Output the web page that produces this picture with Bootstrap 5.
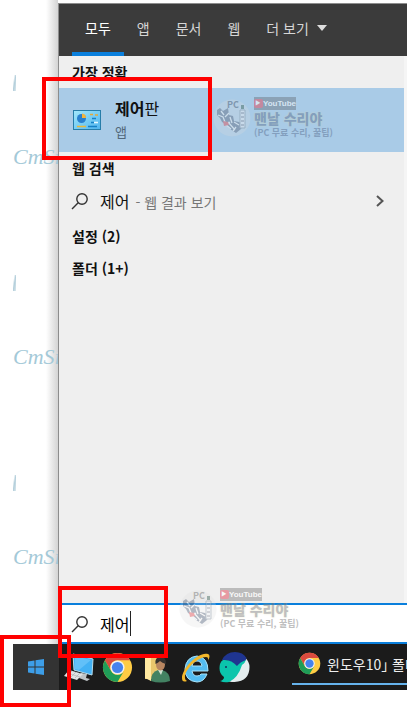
<!DOCTYPE html>
<html lang="ko">
<head>
<meta charset="utf-8">
<meta name="viewport" content="width=device-width, initial-scale=1">
<title>제어 - 검색</title>
<link href="https://cdn.jsdelivr.net/npm/bootstrap@5.3.0/dist/css/bootstrap.min.css" rel="stylesheet">
<style>
body{font-family:"Noto Sans CJK KR","Noto Sans",sans-serif;font-size:14px;line-height:20px;color:#111;background:#fff}
svg{display:block;flex:none}
.screen{min-height:100vh;padding-bottom:17px}
.wallpaper{flex:none;width:58px;padding-left:13px;padding-top:72px;background:linear-gradient(90deg,#fff 46px,#d4d4d4)}
.tile{display:flow-root;height:200px;color:#a4c9d8;font:italic 22px/24px "Liberation Serif",serif;white-space:nowrap}
.tile:last-child{height:120px}
.tick{height:16px;width:3px;margin:3px 0 54px;background:linear-gradient(100deg,#fff0 20%,#b4cfdb 50%,#dce9ee)}
.panel{margin-top:3px;border-left:1px solid #8d8d8d;border-top:1px solid #8d8d8d;background:#efefef}
.tabs{height:52px;padding-left:13px;background:#3b3b3b}
.tab{border:0;background:none;padding:0 13px;color:#d6d6d6;border-bottom:4px solid transparent;white-space:nowrap}
.tab.active{color:#fff;border-color:#0a7fdc}
.caret{width:0;height:0;border:5px solid transparent;border-top:6px solid #ddd;border-bottom:0}
.results{border-right:3px solid #f5f5f5;padding-top:6px}
.heading{font-size:14px;line-height:20px;font-weight:700;margin:0;padding-left:13px}
.best{height:64px;padding-left:14px;margin:6px 0;background:#a9cbe7;color:#111;gap:14px}
.big{font-size:16px;line-height:24px}
.sub{color:#52677a;font-size:13px;line-height:24px}
.web{height:46px;padding:0 19px 0 12px;margin-bottom:2px;color:#111;gap:11px}
.hint{color:#777;padding-left:2px}
.search{height:41px;padding-left:12px;border-top:2px solid #0a7fdc;border-bottom:2px solid #0a7fdc;background:#fff;gap:11px}
.search input{width:30px;border:0;padding:0;outline:0;background:none}
.cursor{width:1px;height:25px;background:#222}
.taskbar{height:46px;margin-left:13px;background:#1b1b1b}
.taskbar button{border:0;background:none;padding:0}
.start{flex:none;width:46px;background:#333!important}
.apps{flex:none;gap:8px;padding-left:5px}
.taskbar .window{height:41px;min-width:0;margin-left:42px;padding-left:6px;border-bottom:2px solid #66b3ec;color:#eee;gap:6px;white-space:nowrap;font-feature-settings:"halt"}
.frame{position:absolute;border:4px solid #f00;pointer-events:none}
.f1{left:42px;top:77px;width:170px;height:83px}
.f2{left:58px;top:586px;width:110px;height:72px}
.f3{left:0;top:635px;width:71px;height:72px}
.stamp{position:absolute;gap:3px;opacity:.5;color:#5f7596;pointer-events:none;white-space:nowrap}
.s1{left:213px;top:97px}
.s2{left:179px;top:588px;color:#808080}
.yt{width:42px;height:13px;background:#6e7b86;color:#fff;font:700 8px/13px "Liberation Sans Narrow","Liberation Sans",sans-serif}
.yt span{width:11px;height:9px;line-height:9px;background:#e0475a;border-radius:2px;font-size:6px}
.s2 .yt{background:#888}
.name{font-weight:900;font-size:14px;line-height:16px;text-shadow:0 0 2px #dfdc9e}
.note{font-weight:700;font-size:9px;line-height:14px}
</style>
<script src="https://cdn.jsdelivr.net/npm/bootstrap@5.3.0/dist/js/bootstrap.bundle.min.js"></script>
</head>
<body>
<svg width="0" height="0" class="position-absolute" aria-hidden="true">
<symbol id="lens" viewBox="0 0 18 18"><circle cx="11" cy="7" r="5.2" fill="none" stroke="#333" stroke-width="1.4"/><path d="M7.2 10.8 1 17" stroke="#333" stroke-width="1.4"/></symbol>
<symbol id="chrome" viewBox="0 0 32 32"><circle cx="16" cy="16" r="15" fill="#fc4"/><path d="M3 8.500A15 15 0 0 1 29 8.500H16A7.500 7.500 0 0 0 9.500 19.750Z" fill="#da4b3f"/><path d="M3 8.500 9.500 19.750A7.500 7.500 0 0 0 22.500 19.750L16 31A15 15 0 0 1 3 8.500Z" fill="#1f9d58"/><circle cx="16" cy="16" r="7.300" fill="#f2f2f2"/><circle cx="16" cy="16" r="5.800" fill="#4583ee"/></symbol>
<symbol id="mascot" viewBox="0 0 38 42"><circle cx="19" cy="21" r="18.500" fill="#ddd" opacity=".5"/><path d="m4 13 3-2 3 3 5-3 1 7 4 1 1 5 5 1 4 3-2 4-5 4-6-4-3-4-5-3-2-4-3-3z" fill="#667388"/><path d="m5 18 5 2 2 5m4-9-4 4m3 5 7 8m-10-6 6 5m3-7 5 3M8 14l3 4m6 2 2 6m-6 2 4-3m3 9 3-4" stroke="#eee" stroke-width="1.300" fill="none"/><path d="m10 24 5 1 1 3-5 1z" fill="#dd5960"/><path d="M27 13h5v18h-5z" fill="#e7eaee" stroke="#8b98a4"/><path d="M28 16h3m-3 4h3m-3 4h3m-3 4h3" stroke="#667"/><path d="M28 8h3v4h-3z" fill="#4a6e63"/></symbol>
</svg>
<main class="screen position-relative d-flex flex-column overflow-hidden">
<div class="d-flex flex-grow-1">
<div class="wallpaper overflow-hidden" aria-hidden="true">
<div class="tile"><div class="tick"></div>CmSi</div>
<div class="tile"><div class="tick"></div>CmSi</div>
<div class="tile"><div class="tick"></div>CmSi</div>
</div>
<section class="panel d-flex flex-column flex-grow-1">
<nav class="tabs d-flex">
<button class="tab active">모두</button><button class="tab">앱</button><button class="tab">문서</button><button class="tab">웹</button><button class="tab d-flex align-items-center gap-2">더 보기 <span class="caret"></span></button>
</nav>
<div class="results flex-grow-1">
<h2 class="heading">가장 정확</h2>
<a href="#" class="best d-flex align-items-center text-decoration-none">
<svg width="28" height="20" viewBox="0 0 28 20"><defs><linearGradient id="cp" x2="1" y2="1"><stop stop-color="#a2e8fb"/><stop offset="1" stop-color="#4fb4ee"/></linearGradient></defs><rect x=".5" y=".5" width="27" height="19" fill="url(#cp)" stroke="#277da9"/><circle cx="8.500" cy="8.500" r="4.500" fill="#2881cf"/><path d="M9 8V3.500A4.500 4.500 0 0 1 13 8z" fill="#f3b43a"/><path d="M4 16.500h9" stroke="#e9b838" stroke-width="1.500"/><path d="M15 16.500h9M19 8.500h4M18 12.500h3" stroke="#1681c6" stroke-width="1.500"/><path d="M17 4.500h3M22 5h3" stroke="#e5a93a" stroke-width="1.500"/><path d="M21 12.500h4" stroke="#e8f9ff" stroke-width="1.500"/></svg>
<span class="d-flex flex-column"><span class="big"><span class="fw-bold">제어</span>판</span><span class="sub">앱</span></span>
</a>
<h2 class="heading">웹 검색</h2>
<a href="#" class="web d-flex align-items-center text-decoration-none">
<svg width="18" height="18"><use href="#lens"/></svg>
<span class="flex-grow-1"><span class="big">제어</span> <span class="hint">- 웹 결과 보기</span></span>
<svg width="10" height="14" viewBox="0 0 10 14"><path d="m2 2 5.500 5L2 12" fill="none" stroke="#555" stroke-width="2"/></svg>
</a>
<h2 class="heading mb-2">설정 (2)</h2>
<h2 class="heading pt-1">폴더 (1+)</h2>
</div>
<div class="search d-flex align-items-center">
<svg width="18" height="18"><use href="#lens"/></svg>
<div class="d-flex align-items-center"><input class="big" type="text" value="제어" aria-label="검색"><span class="cursor"></span></div>
</div>
</section>
</div>
<footer class="taskbar d-flex overflow-hidden">
<button class="start d-flex align-items-center justify-content-center" aria-label="시작"><svg width="18" height="18" viewBox="0 0 18 18" fill="#3d9ee8"><path d="m1 3.500 6.500-1v6H1zm7.500-1.200L17 1v7.500H8.500zM1 9.500h6.500v6L1 14.500zm7.500 0H17V17l-8.500-1.300z"/></svg></button>
<div class="apps d-flex align-items-center">
<button aria-label="내 PC"><svg width="30" height="30" viewBox="0 0 30 30"><path d="m9 2 20 5-1 16-18-5z" fill="#43b1f4" stroke="#b7deef"/><path d="m11 4 16 4-12 10-4-1z" fill="#82d0fb" opacity=".5"/><path d="m17 21 6 1-1 4 4 1-3 2-8-3z" fill="#c0c5c7"/><path d="m5 18 14 4-6 6-13-4z" fill="#e0e2e3"/><path d="m3 21 13 4M8 19l-5 5m9-4-5 5m9-4-5 5" stroke="#aaa" stroke-width=".6"/></svg></button>
<button aria-label="Chrome"><svg width="31" height="31"><use href="#chrome"/></svg></button>
<button aria-label="사용자 폴더"><svg width="31" height="31" viewBox="0 0 31 31"><path d="M4 3h15v24H4z" fill="#e9c66c"/><path d="m4 3 6 3v23l-6-3z" fill="#ffe9a0"/><path d="M10 29q0-9 7-11h4q8 2 8 11-10 3-19 0" fill="#438262"/><path d="m17 18 3 5 2-5" fill="#d1e0d0"/><ellipse cx="19.500" cy="12.500" rx="4.500" ry="6" fill="#b88660"/><path d="M14.500 12q-1-7 5-7t5.500 7q-4-1-6-3-2 2-4.500 3" fill="#34302d"/></svg></button>
<button aria-label="Internet Explorer"><svg width="31" height="31" viewBox="0 0 31 31"><path d="M28 19H12q1 5 5 5 3 0 4-2h6q-3 8-10 8Q5 29 5 17 6 5 17 4q11 1 11 15zM12 14h10q-1-5-5-5t-5 5" fill="#54bdf2" stroke="#a9e4fc"/><path d="M7 29q-5 2-5-3C2 16 19-1 28 2q3 1 0 7 1-4-2-4C18 5 4 18 5 26q0 2 2 3" fill="#f3b72b"/></svg></button>
<button aria-label="Whale"><svg width="31" height="31" viewBox="0 0 31 31"><path d="M30.500 15q0 14-15 15-6 0-9-2 8-2 12-14 5-1 8-8 4 4 4 9" fill="#e4edef"/><path d="M3 8Q7 0 16 0q8 0 11.500 6-1 5-9 9Q11 7 3 8" fill="#1f3590"/><path d="M1 12q1-3 3-4 8-1 14 6 3-4 9-6-1 3-4 5-4 13-13 17-5 1-9-1 4-1 4-4Q-1 21 1 12" fill="#0bc5ac"/><circle cx="7" cy="15" r="1" fill="#17305c"/></svg></button>
</div>
<button class="window d-flex align-items-center flex-grow-1"><svg width="23" height="23"><use href="#chrome"/></svg><span>윈도우10」 폴더</span></button>
</footer>
<div class="stamp s1 d-flex" aria-hidden="true"><svg width="38" height="42" viewBox="0 0 38 42"><use href="#mascot"/><text x="14" y="11" font-size="9" font-weight="700" fill="#556277">PC</text></svg><div><div class="yt d-flex align-items-center justify-content-evenly"><span class="text-center">▶</span>YouTube</div><div class="name">맨날 수리야</div><div class="note">(PC 무료 수리, 꿀팁)</div></div></div>
<div class="stamp s2 d-flex" aria-hidden="true"><svg width="38" height="42" viewBox="0 0 38 42"><use href="#mascot"/><text x="14" y="11" font-size="9" font-weight="700" fill="#777">PC</text></svg><div><div class="yt d-flex align-items-center justify-content-evenly"><span class="text-center">▶</span>YouTube</div><div class="name">맨날 수리야</div><div class="note">(PC 무료 수리, 꿀팁)</div></div></div>
<div class="frame f1"></div><div class="frame f2"></div><div class="frame f3"></div>
</main>
</body>
</html>
